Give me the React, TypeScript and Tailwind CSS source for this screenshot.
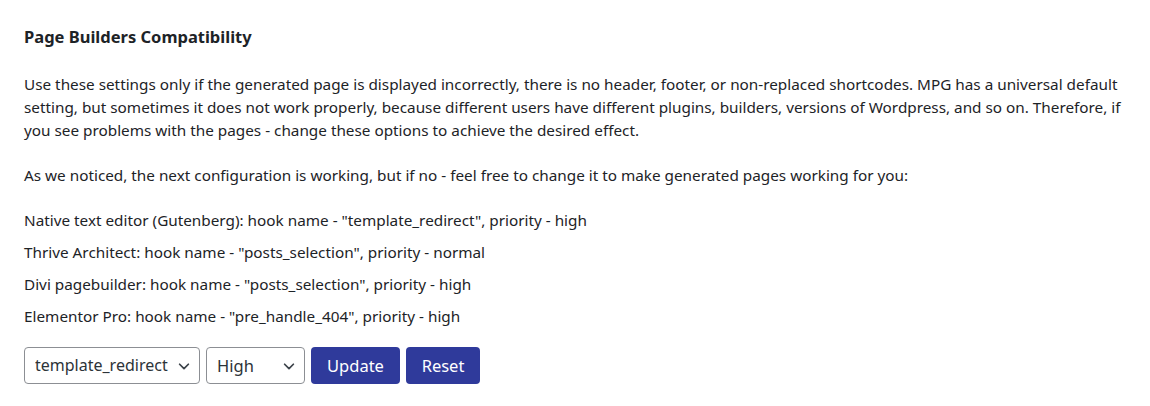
import React from 'react';

const hooks = [
  'Native text editor (Gutenberg): hook name - "template_redirect", priority - high',
  'Thrive Architect: hook name - "posts_selection", priority - normal',
  'Divi pagebuilder: hook name - "posts_selection", priority - high',
  'Elementor Pro: hook name - "pre_handle_404", priority - high',
];

function Chevron() {
  return (
    <svg width="14" height="14" viewBox="0 0 16 16" fill="none" className="pointer-events-none absolute right-[9px] top-1/2 -translate-y-1/2">
      <path d="M3 6l5 5 5-5" stroke="#3c434a" strokeWidth="2" strokeLinecap="round" strokeLinejoin="round" />
    </svg>
  );
}

export default function App() {
  return (
    <div className="w-[1150px] h-[406px] bg-white px-6 pt-[26px] text-[#1d2327] font-['Noto_Sans',sans-serif] text-[15.3px] leading-[23px]">
      <h2 className="text-[16.5px] font-bold leading-[22px] mb-[25px]">Page Builders Compatibility</h2>

      <p className="mb-[22px]">
        Use these settings only if the generated page is displayed incorrectly, there is no header, footer, or non-replaced shortcodes. MPG has a universal default setting, but sometimes it does not work properly, because different users have different plugins, builders, versions of Wordpress, and so on. Therefore, if you see problems with the pages - change these options to achieve the desired effect.
      </p>

      <p className="mb-[22px]">
        As we noticed, the next configuration is working, but if no - feel free to change it to make generated pages working for you:
      </p>

      <div className="flex flex-col gap-[9px]">
        {hooks.map((h) => (
          <p key={h}>{h}</p>
        ))}
      </div>

      <div className="mt-[19px] flex items-center gap-[6px]">
        <div className="relative">
          <select
            defaultValue="template_redirect"
            className="appearance-none w-[176px] h-[37px] rounded border border-[#8c8f94] bg-white pl-[10px] pr-[22px] text-[16px] text-[#2c3338]"
          >
            <option>template_redirect</option>
            <option>posts_selection</option>
            <option>pre_handle_404</option>
          </select>
          <Chevron />
        </div>
        <div className="relative">
          <select
            defaultValue="High"
            className="appearance-none w-[99px] h-[37px] rounded border border-[#8c8f94] bg-white pl-[10px] pr-8 text-[16.5px] text-[#2c3338]"
          >
            <option>High</option>
            <option>Normal</option>
            <option>Low</option>
          </select>
          <Chevron />
        </div>
        <button className="h-[37px] w-[89px] rounded bg-[#2f3a9b] text-white text-[16.5px]">Update</button>
        <button className="h-[37px] w-[74px] rounded bg-[#2f3a9b] text-white text-[16.5px]">Reset</button>
      </div>
    </div>
  );
}
